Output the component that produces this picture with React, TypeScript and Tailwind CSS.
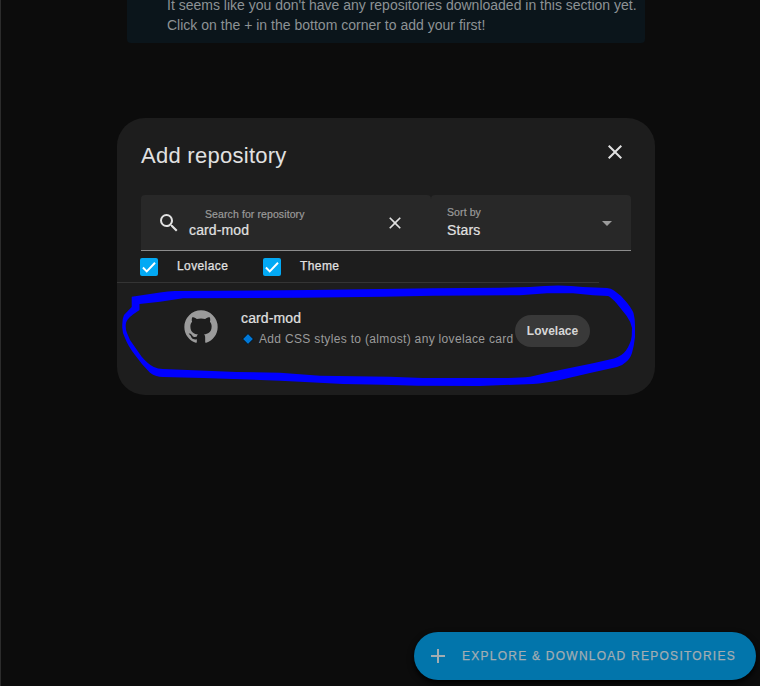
import React from "react";

const GITHUB =
  "M12,2A10,10 0 0,0 2,12C2,16.42 4.87,20.17 8.84,21.5C9.34,21.58 9.5,21.27 9.5,21C9.5,20.77 9.5,20.14 9.5,19.31C6.73,19.91 6.14,17.97 6.14,17.97C5.68,16.81 5.03,16.5 5.03,16.5C4.12,15.88 5.1,15.9 5.1,15.9C6.1,15.97 6.63,16.93 6.63,16.93C7.5,18.45 8.97,18 9.54,17.76C9.63,17.11 9.89,16.67 10.17,16.42C7.95,16.17 5.62,15.31 5.62,11.5C5.62,10.39 6,9.5 6.65,8.79C6.55,8.54 6.2,7.5 6.75,6.15C6.75,6.15 7.59,5.88 9.5,7.17C10.29,6.95 11.15,6.84 12,6.84C12.85,6.84 13.71,6.95 14.5,7.17C16.41,5.88 17.25,6.15 17.25,6.15C17.8,7.5 17.45,8.54 17.35,8.79C18,9.5 18.38,10.39 18.38,11.5C18.38,15.32 16.04,16.16 13.81,16.41C14.17,16.72 14.5,17.33 14.5,18.26C14.5,19.6 14.5,20.68 14.5,21C14.5,21.27 14.66,21.59 15.17,21.5C19.14,20.16 22,16.42 22,12A10,10 0 0,0 12,2Z";
const CLOSE =
  "M19,6.41L17.59,5L12,10.59L6.41,5L5,6.41L10.59,12L5,17.59L6.41,19L12,13.41L17.59,19L19,17.59L13.41,12L19,6.41Z";
const MAGNIFY =
  "M9.5,3A6.5,6.5 0 0,1 16,9.5C16,11.11 15.41,12.59 14.44,13.73L14.71,14H15.5L20.5,19L19,20.5L14,15.5V14.71L13.73,14.44C12.59,15.41 11.11,16 9.5,16A6.5,6.5 0 0,1 3,9.5A6.5,6.5 0 0,1 9.5,3M9.5,5C7,5 5,7 5,9.5C5,12 7,14 9.5,14C12,14 14,12 14,9.5C14,7 12,5 9.5,5Z";
const PLUS = "M19,13H13V19H11V13H5V11H11V5H13V11H19V13Z";

function Icon({ path, className }: { path: string; className: string }) {
  return (
    <svg viewBox="0 0 24 24" fill="currentColor" className={"shrink-0 " + className}>
      <path d={path} />
    </svg>
  );
}

function Check({ label, className }: { label: string; className: string }) {
  return (
    <label className={"flex items-start " + className}>
      <span className="mt-[7px] flex size-[18px] items-center justify-center rounded-[2px] bg-[#03a9f4]">
        <svg viewBox="0 0 24 24" className="size-[18px]" fill="none" stroke="#fff" strokeWidth="2.6">
          <path d="M3.9 12.7 9 17.8 20 6.4" />
        </svg>
      </span>
      <span className="ml-[19px] mt-[6px] text-[12px] leading-[18px] tracking-[0.4px] text-[#e1e1e1] [-webkit-text-stroke:0.25px_#e1e1e1]">
        {label}
      </span>
    </label>
  );
}

/* Freehand marker loop around the search result */
function Marker() {
  return (
    <svg className="pointer-events-none absolute left-0 top-0 h-[686px] w-[760px]" viewBox="0 0 760 686">
      <path
        fill="#0000ff"
        fillRule="evenodd"
        d="M131.7 296.7 L160 292.5 Q168 291 175 291 L310 290 L433 288.3 L500 287.7 L530 287 Q560 284 583 287 L607 288 Q611 288 614 290.5 Q621 295 627 302.7 Q632 309 633.5 313 Q635 319 635 325 L635 337 Q634 346 632 353 Q630 359 626 362 Q622 366 617 367 L590 373 L560 380 Q545 383 533 384 L480 386 L417 385.7 L383 384.7 L343 384 L300 381.7 L280 380.7 L233 379 L203 378 L163 377 Q156 377 150 372.7 Q142 365 135 355 Q128 346 125 338 Q122 332 122.3 326.7 Q122 319 124 315 L131.7 307 Z
        M139.5 304 L139.5 310 L133.3 314.3 Q127 319 126 323 Q125 328 127 333 L130 340 L141.7 356.7 Q148 364 153.3 366.7 Q158 369 163 369 L236.7 372 L280 372.7 L320 375.7 L390 376.7 L423 378 L500 378 Q518 378 530 376.7 L560 370 L593 363.3 L614 358.5 Q622 356 626 350.5 Q631 343 631.7 336 L632 328 Q631 322 626.7 316 L616.7 303.5 Q611 297 608 296 L593 295.3 L573 293.3 L547 293.3 L520 295.3 L433 295.7 L383 296.7 L300 297.7 L183 298.3 L160 301.7 Z"
      />
    </svg>
  );
}

export default function App() {
  return (
    <div className="relative h-[686px] w-[760px] overflow-hidden border-l border-[#2c2c2c] bg-[#0c0c0c] font-['Liberation_Sans',Arial,sans-serif]">
      <div className="ml-[126px] h-[43px] w-[518px] overflow-hidden rounded-b-[4px] bg-[#0b151b] pl-10 text-[14px] leading-5 text-[#8d9295]">
        <p className="-mt-[5px] whitespace-nowrap">
          It seems like you don't have any repositories downloaded in this section yet.
        </p>
        <p className="whitespace-nowrap tracking-[0.01px]">Click on the + in the bottom corner to add your first!</p>
      </div>

      <div className="ml-[116px] mt-[75px] flex h-[277px] w-[538px] flex-col rounded-[28px] bg-[#1d1d1d]">
        <header className="flex h-[77px] shrink-0 items-start justify-between pl-6 pr-7">
          <h1 className="mt-[24px] text-[22px] leading-7 tracking-[0.27px] text-[#e1e1e1]">Add repository</h1>
          <Icon path={CLOSE} className="mt-[22px] size-6 text-[#e1e1e1]" />
        </header>

        <div className="mx-6 flex h-14 w-[490px] shrink-0 border-b border-[#8c8c8c]">
          <div className="flex w-[290px] rounded-t-[4px] bg-[#282828]">
            <Icon path={MAGNIFY} className="ml-4 mt-4 size-6 text-[#e1e1e1]" />
            <div className="ml-2 w-[196px]">
              <div className="ml-[16px] mt-[12px] text-[10.5px] leading-[14px] tracking-[0.1px] text-[#9b9b9b] [-webkit-text-stroke:0.2px_#9b9b9b]">
                Search for repository
              </div>
              <div className="mt-px text-[14px] leading-4 tracking-[0.13px] text-[#e1e1e1] [-webkit-text-stroke:0.2px_#e1e1e1]">
                card-mod
              </div>
            </div>
            <Icon path={CLOSE} className="mt-[18px] size-5 text-[#e1e1e1]" />
          </div>
          <div className="flex w-[200px] justify-between rounded-t-[4px] bg-[#282828] pl-4 pr-3">
            <div>
              <div className="mt-[10px] text-[10.5px] leading-[14px] tracking-[0.1px] text-[#9b9b9b] [-webkit-text-stroke:0.2px_#9b9b9b]">
                Sort by
              </div>
              <div className="mt-[3px] text-[14px] leading-4 tracking-[0.13px] text-[#e1e1e1] [-webkit-text-stroke:0.2px_#e1e1e1]">
                Stars
              </div>
            </div>
            <Icon path="M7 10l5 5 5-5z" className="mt-4 size-6 text-[#9b9b9b]" />
          </div>
        </div>

        <div className="flex h-8 w-[482px] shrink-0 border-b border-[#343434] pl-[23px]">
          <Check label="Lovelace" className="w-[123px]" />
          <Check label="Theme" className="" />
        </div>

        <div className="flex items-start pl-16 pt-[24px]">
          <Icon path={GITHUB} className="size-10 text-[#9b9b9b]" />
          <div className="ml-5 w-[274px] whitespace-nowrap">
            <div className="mt-[3px] text-[14px] leading-4 tracking-[0.13px] text-[#e1e1e1] [-webkit-text-stroke:0.2px_#e1e1e1]">
              card-mod
            </div>
            <div className="mt-[5px] flex h-4 items-center text-[12px] leading-4 tracking-[0.33px] text-[#9b9b9b]">
              <svg viewBox="0 0 12 12" className="ml-[1px] mr-[5px] size-3">
                <path d="M6 .6 11.4 6 6 11.4 .6 6Z" fill="#0078d7" stroke="#080808" strokeWidth=".8" />
              </svg>
              Add CSS styles to (almost) any lovelace card
            </div>
          </div>
          <div className="mt-[8px] flex h-8 w-[75px] items-center justify-center rounded-full bg-[#393939] text-[12px] font-bold text-[#d6d6d6]">
            Lovelace
          </div>
        </div>
      </div>

      <button className="absolute left-[413px] top-[632px] flex h-12 w-[342px] items-center rounded-full bg-[#0275ab] pl-3 text-[12px] text-[#a2adb2] shadow-[0_3px_6px_#000]">
        <Icon path={PLUS} className="size-6" />
        <span className="ml-3 whitespace-nowrap tracking-[1.25px] [-webkit-text-stroke:0.25px_#a2adb2]">
          EXPLORE &amp; DOWNLOAD REPOSITORIES
        </span>
      </button>

      <div className="absolute -left-px top-0">
        <Marker />
      </div>
    </div>
  );
}
